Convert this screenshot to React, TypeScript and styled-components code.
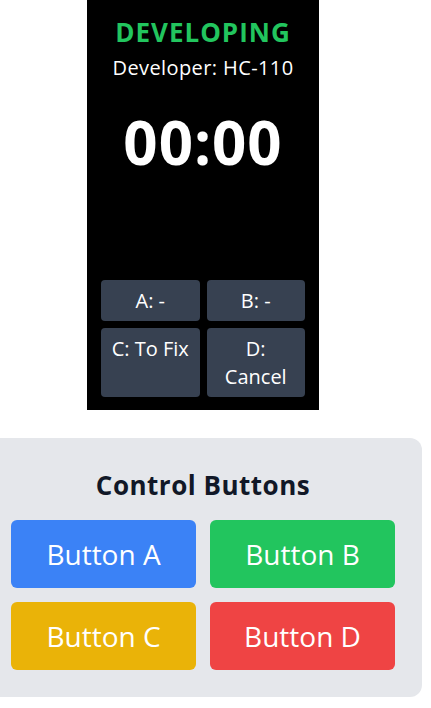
import React from 'react';
import styled, { createGlobalStyle } from 'styled-components';

const GlobalStyle = createGlobalStyle`
  html, body {
    margin: 0;
    padding: 0;
    background: #ffffff;
    font-family: "Open Sans", "Noto Sans", sans-serif;
    overflow: hidden;
  }
`;

// page column, a bit wider than the window so everything sits slightly left
const Page = styled.div`
  width: 438px;
  margin-left: -16px;
  display: flex;
  flex-direction: column;
  align-items: center;
`;

const Screen = styled.div`
  width: 232px;
  height: 410px;
  box-sizing: border-box;
  padding: 14px 14px 13px;
  background: #000000;
  display: flex;
  flex-direction: column;
  align-items: center;
`;

const Status = styled.div`
  color: #22c55e;
  font-size: 26px;
  font-weight: 700;
  line-height: 32px;
  letter-spacing: 1px;
  margin-top: 2px;
`;

const DevName = styled.div`
  color: #ffffff;
  font-size: 20px;
  line-height: 28px;
  letter-spacing: 0.4px;
  margin-top: 6px;
`;

const Timer = styled.div`
  color: #ffffff;
  font-size: 60px;
  font-weight: 700;
  line-height: 60px;
  letter-spacing: 1px;
  margin-top: 30px;
`;

const SlotGrid = styled.div`
  margin-top: auto;
  width: 100%;
  display: grid;
  grid-template-columns: 1fr 1fr;
  gap: 7px;
`;

const Slot = styled.div`
  background: #374151;
  color: #ffffff;
  border-radius: 4px;
  font-size: 20px;
  line-height: 28px;
  padding: 6.5px 8px;
  text-align: center;
`;

const Panel = styled.div`
  margin-top: 28px;
  width: 100%;
  box-sizing: border-box;
  padding: 31px 27px 27px;
  background: #e5e7eb;
  border-radius: 12px;
`;

const PanelTitle = styled.h2`
  margin: 0 0 19px;
  text-align: center;
  color: #111827;
  font-size: 26px;
  font-weight: 700;
  line-height: 32px;
  letter-spacing: 0.5px;
`;

const ButtonGrid = styled.div`
  display: grid;
  grid-template-columns: 1fr 1fr;
  gap: 14px;
`;

const ControlButton = styled.button<{ $color: string }>`
  height: 68px;
  border: none;
  border-radius: 6px;
  background: ${({ $color }) => $color};
  color: #ffffff;
  font-family: inherit;
  font-size: 28px;
  cursor: pointer;
`;

const slots = ['A: -', 'B: -', 'C: To Fix', 'D: Cancel'];

const buttons = [
  { label: 'Button A', color: '#3b82f6' },
  { label: 'Button B', color: '#22c55e' },
  { label: 'Button C', color: '#eab308' },
  { label: 'Button D', color: '#ef4444' },
];

const App: React.FC = () => {
  return (
    <>
      <GlobalStyle />
      <Page>
        <Screen>
          <Status>DEVELOPING</Status>
          <DevName>Developer: HC-110</DevName>
          <Timer>00:00</Timer>
          <SlotGrid>
            {slots.map((s) => (
              <Slot key={s}>{s}</Slot>
            ))}
          </SlotGrid>
        </Screen>
        <Panel>
          <PanelTitle>Control Buttons</PanelTitle>
          <ButtonGrid>
            {buttons.map((b) => (
              <ControlButton key={b.label} $color={b.color}>
                {b.label}
              </ControlButton>
            ))}
          </ButtonGrid>
        </Panel>
      </Page>
    </>
  );
};

export default App;
